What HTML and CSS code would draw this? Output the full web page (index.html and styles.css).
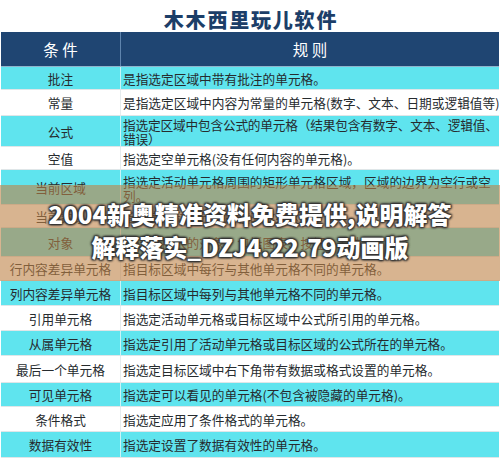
FILE: index.html
```html
<!DOCTYPE html>
<html lang="zh-CN">
<head>
<meta charset="utf-8">
<link rel="stylesheet" href="styles.css">
</head>
<body>
<div class="page">
  <div class="title">木木西里玩儿软件</div>
  <div class="table">
    <div class="row head">
      <div class="c1">条 件</div>
      <div class="c2">规 则</div>
    </div>
    <div class="row cyan h23"><div class="c1">批注</div><div class="c2">是指选定区域中带有批注的单元格。</div></div>
    <div class="row white h26"><div class="c1">常量</div><div class="c2">是指选定区域中内容为常量的单元格(数字、文本、日期或逻辑值等)</div></div>
    <div class="row cyan h31"><div class="c1">公式</div><div class="c2 multi tight">指选定区域中包含公式的单元格（结果包含有数字、文本、逻辑值、<br>错误）</div></div>
    <div class="row white h23"><div class="c1">空值</div><div class="c2">指选定空单元格(没有任何内容的单元格)。</div></div>
    <div class="row cyan h35"><div class="c1">当前区域</div><div class="c2 multi">指选定活动单元格周围的矩形单元格区域，区域的边界为空行或空<br>列。</div></div>
    <div class="row white h23"><div class="c1">当前数组</div><div class="c2">指选定活动单元格所在的数组区域。</div></div>
    <div class="row cyan h29"><div class="c1">对象</div><div class="c2">指选定插入的对象，包括图表、按钮、文本框。</div></div>
    <div class="row white h24"><div class="c1">行内容差异单元格</div><div class="c2">指目标区域中每行与其他单元格不同的单元格。</div></div>
    <div class="row cyan h25"><div class="c1">列内容差异单元格</div><div class="c2">指目标区域中每列与其他单元格不同的单元格。</div></div>
    <div class="row white h25"><div class="c1">引用单元格</div><div class="c2">指选定活动单元格或目标区域中公式所引用的单元格。</div></div>
    <div class="row cyan h25"><div class="c1">从属单元格</div><div class="c2">指选定引用了活动单元格或目标区域的公式所在的单元格。</div></div>
    <div class="row white h27"><div class="c1">最后一个单元格</div><div class="c2">指选定目标区域中右下角带有数据或格式设置的单元格。</div></div>
    <div class="row cyan h24"><div class="c1">可见单元格</div><div class="c2">指选定可以看见的单元格(不包含被隐藏的单元格)。</div></div>
    <div class="row white h25"><div class="c1">条件格式</div><div class="c2">指选定应用了条件格式的单元格。</div></div>
    <div class="row cyan h26"><div class="c1">数据有效性</div><div class="c2">指选定设置了数据有效性的单元格。</div></div>
  </div>
  <div class="band">
    <div class="band-text">2004新奥精准资料免费提供,说明解答<br>解释落实_DZJ4.22.79动画版</div>
  </div>
</div>
</body>
</html>
```
FILE: styles.css
```css
* { box-sizing: border-box; }
html, body { margin: 0; padding: 0; background: #ffffff; }
body {
  width: 500px;
  height: 463px;
  overflow: hidden;
  font-family: "Noto Sans CJK SC", "Noto Sans", sans-serif;
}
.page {
  position: relative;
  padding: 0 1px;
}
.title {
  height: 32px;
  display: flex;
  align-items: center;
  justify-content: center;
  padding-left: 2px;
  padding-top: 7px;
  font-size: 20px;
  font-weight: 900;
  letter-spacing: 1.8px;
  color: #1c3e68;
  line-height: 1;
}
.table {
  display: flex;
  flex-direction: column;
}
.row {
  display: grid;
  grid-template-columns: 120px 1fr;
  font-size: 12.7px;
  color: #262b2e;
  border-bottom: 1px solid #dfe6e8;
}
.row .c1 {
  display: flex;
  align-items: center;
  justify-content: center;
  border-right: 1px solid #e6ecee;
  white-space: nowrap;
}
.row .c2 {
  display: flex;
  align-items: center;
  padding-left: 2px;
  white-space: nowrap;
  overflow: hidden;
}
.row .c2.multi {
  display: block;
  line-height: 14px;
  padding-top: 2px;
}
.row .c2.tight { letter-spacing: -0.2px; }
.cyan { background: #5fe4ee; }
.cyan .c1 { border-right-color: #c8f4f7; }
.white { background: #ffffff; }
.head {
  height: 35px;
  background: #1f4572;
  color: #ffffff;
  font-size: 15.5px;
  border-bottom: 1px solid #8fb4cc;
}
.head .c1 { border-right: 1px solid #5f84ad; }
.head .c2 { justify-content: center; padding-left: 0; }
.h23 { height: 23px; }
.h24 { height: 24px; }
.h25 { height: 25px; }
.h26 { height: 26px; }
.h27 { height: 27px; }
.h29 { height: 29px; }
.h31 { height: 31px; }
.h35 { height: 35px; }
.h35 .c2.multi { padding-top: 5px; }

.band {
  position: absolute;
  left: 0;
  right: 0;
  top: 185px;
  height: 96px;
  background: rgba(190, 130, 70, 0.6);
  display: flex;
  align-items: center;
  justify-content: center;
}
.band-text {
  text-align: center;
  color: #ffffff;
  font-family: "Noto Sans CJK SC", "Noto Sans", sans-serif;
  font-weight: 900;
  font-size: 24px;
  line-height: 33px;
  margin-top: -6px;
  text-shadow: 1px 1px 2px #333, -1px 1px 2px #333, 1px -1px 2px #333, -1px -1px 2px #333, 0 0 3px #222;
}
```
